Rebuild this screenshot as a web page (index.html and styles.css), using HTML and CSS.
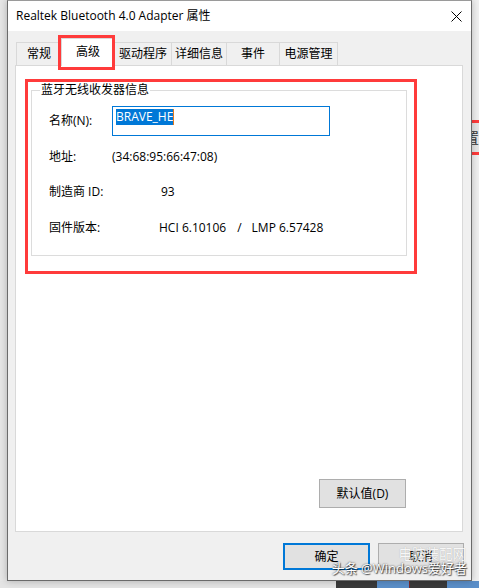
FILE: index.html
```html
<!DOCTYPE html>
<html>
  <head>
    <meta charset="UTF-8">
    <title>Realtek Bluetooth 4.0 Adapter 属性</title>
    <link rel="stylesheet" href="styles.css">
  </head>
  <body>
    <div class="desktop">
      <div class="desk-row">
        <div class="gutter"></div>
        <div class="dialog">
          <div class="titlebar">
            <span class="title">Realtek Bluetooth 4.0 Adapter 属性</span>
            <svg class="close" width="11" height="11" viewBox="0 0 11 11">
              <path d="M0.5 0.5 L10.5 10.5 M10.5 0.5 L0.5 10.5" stroke="#000" stroke-width="1" fill="none"/>
            </svg>
          </div>
          <div class="dialog-body">
            <div class="tabs">
              <div class="tab tab-general">常规</div>
              <div class="tab tab-active">高级</div>
              <div class="tab tab-driver">驱动程序</div>
              <div class="tab tab-details">详细信息</div>
              <div class="tab tab-events">事件</div>
              <div class="tab tab-power">电源管理</div>
            </div>
            <div class="panel">
              <div class="mark-box">
                <fieldset class="group">
                  <legend>蓝牙无线收发器信息</legend>
                  <div class="props">
                    <div class="prop-label">名称(N):</div>
                    <div class="name-field"><span class="selected">BRAVE_HE</span><span class="caret"></span></div>
                    <div class="prop-label">地址:</div>
                    <div class="prop-value">(34:68:95:66:47:08)</div>
                    <div class="prop-label">制造商 ID:</div>
                    <div class="prop-value value-vendor">93</div>
                    <div class="prop-label">固件版本:</div>
                    <div class="prop-value value-firmware">HCI 6.10106<span class="slash">/</span>LMP 6.57428</div>
                  </div>
                </fieldset>
              </div>
              <button class="btn btn-default">默认值(D)</button>
            </div>
            <div class="dialog-actions">
              <button class="btn btn-primary">确定</button>
              <button class="btn">取消</button>
            </div>
          </div>
        </div>
        <div class="side-strip">
          <div class="side-button">置</div>
        </div>
      </div>
      <div class="taskbar">
        <div class="taskbar-light"></div>
        <div class="taskbar-dark">
          <span class="task task-gap"></span>
          <span class="task task-blue"></span>
          <span class="task task-gap2"></span>
          <span class="task task-blue"></span>
        </div>
      </div>
      <div class="watermark">
        <div class="wm-site">电脑装配网</div>
        <div class="wm-author">头条 @Windows爱好者</div>
      </div>
    </div>
  </body>
</html>
```

FILE: styles.css
```css
* {
  box-sizing: border-box;
}

body {
  margin: 0;
  font-family: "Open Sans", "Noto Sans CJK SC", sans-serif;
  font-size: 12px;
  color: #000;
  background-color: #e9e9e9;
}

.desktop {
  position: relative;
  width: 479px;
  height: 588px;
  overflow: hidden;
}

.desk-row {
  display: flex;
  height: 581px;
}

.gutter {
  width: 7px;
  background-color: #e6e6e6;
}

.dialog {
  width: 465px;
  display: flex;
  flex-direction: column;
  border: 1px solid #6b6b6b;
  border-top-color: #9a9a9a;
  background-color: #f0f0f0;
  box-shadow: 0 0 7px rgba(0, 0, 0, 0.25);
  position: relative;
  z-index: 1;
}

.titlebar {
  height: 30px;
  background-color: #fff;
  display: flex;
  align-items: center;
  justify-content: space-between;
  padding: 0 9px 0 8px;
}

.title {
  font-size: 12px;
  line-height: 16px;
}

.close {
  display: block;
}

.dialog-body {
  flex: 1;
  display: flex;
  flex-direction: column;
  padding-top: 11px;
}

/* tabs */
.tabs {
  display: flex;
  align-items: flex-end;
  height: 23px;
  margin-left: 8px;
}

.tab {
  height: 23px;
  display: flex;
  align-items: center;
  justify-content: center;
  border: 1px solid #d9d9d9;
  border-bottom: none;
  background-color: #f0f0f0;
  line-height: 16px;
  margin-left: -1px;
}

.tab-general { width: 46px; margin-left: 0; }
.tab-driver { width: 58px; }
.tab-details { width: 56px; }
.tab-events { width: 54px; }
.tab-power { width: 59px; }

.tab-active {
  width: 54px;
  height: 28px;
  margin-bottom: -1px;
  background-color: #fff;
  position: relative;
  z-index: 2;
  padding-bottom: 2px;
}

.tab-active::after {
  content: "";
  position: absolute;
  top: -4px;
  bottom: -4px;
  left: -4px;
  right: -1px;
  border: 3px solid #ff3b3b;
}

.panel {
  height: 467px;
  margin: 0 8px 0 7px;
  background-color: #fff;
  border: 1px solid #d9d9d9;
  display: flex;
  flex-direction: column;
}

.mark-box {
  width: 392px;
  margin: 13px 0 0 9px;
  border: 3px solid #ff3b3b;
  padding: 0 7px 15px 3px;
}

.group {
  margin: 0;
  border: 1px solid #dcdcdc;
  padding: 8px 16px 12px 17px;
}

.group legend {
  padding: 0 1px;
  margin-left: -9px;
  line-height: 16px;
}

.props {
  display: grid;
  grid-template-columns: 63px 1fr;
  grid-auto-rows: 30px;
  row-gap: 5.5px;
  align-items: center;
}

.prop-label,
.prop-value {
  line-height: 16px;
}

.value-vendor {
  padding-left: 49px;
}

.value-firmware {
  padding-left: 47px;
}

.slash {
  margin: 0 10px 0 11px;
}

.name-field {
  width: 218px;
  height: 30px;
  border: 1px solid #0078d7;
  padding: 2px 3px;
  display: flex;
  align-items: flex-start;
  line-height: 16px;
}

.selected {
  background-color: #0078d7;
  color: #fff;
}

.caret {
  width: 1px;
  height: 16px;
  background-color: #e07a1f;
}

.btn {
  font-family: inherit;
  font-size: 12px;
  color: #000;
  background-color: #e1e1e1;
  border: 1px solid #adadad;
  padding: 0;
  line-height: 16px;
}

.btn-default {
  width: 87px;
  height: 29px;
  margin: auto 56px 23px auto;
}

.dialog-actions {
  display: flex;
  justify-content: flex-end;
  gap: 8px;
  padding: 11px 7px 10px 0;
}

.dialog-actions .btn {
  width: 87px;
  height: 27px;
}

.dialog-actions .btn:last-child {
  width: 86px;
}

.btn-primary {
  border: 2px solid #0078d7;
}

/* background window behind the dialog */
.side-strip {
  width: 7px;
  background-color: #f0f0f0;
  overflow: hidden;
}

.side-button {
  margin-top: 120px;
  height: 35px;
  border-top: 3px solid #ff3b3b;
  border-bottom: 3px solid #ff3b3b;
  background-color: #e6e6e6;
  font-size: 14px;
  line-height: 29px;
  text-indent: -7px;
  color: #333;
}

.taskbar {
  display: flex;
  height: 7px;
}

.taskbar-light {
  width: 339px;
  background-color: #e4e4e4;
}

.taskbar-dark {
  flex: 1;
  display: flex;
  background-color: #3a3a3a;
}

.task-gap { width: 41px; }
.task-gap2 { width: 38px; border-left: 1px solid #7a2a2a; }

.task-blue {
  width: 32px;
  background-color: #5b8fc9;
}

.watermark {
  position: absolute;
  right: 12px;
  bottom: 12px;
  z-index: 3;
  text-align: right;
  color: #fff;
  line-height: 16px;
}

.wm-site {
  font-size: 13.5px;
  opacity: 0.75;
  margin-right: 1px;
  margin-bottom: -2px;
  text-shadow: 0 0 1px rgba(0, 0, 0, 0.35);
}

.wm-author {
  font-size: 13px;
  text-shadow: 0 0 2px rgba(0, 0, 0, 0.8), 1px 1px 1px rgba(0, 0, 0, 0.6);
}
```
